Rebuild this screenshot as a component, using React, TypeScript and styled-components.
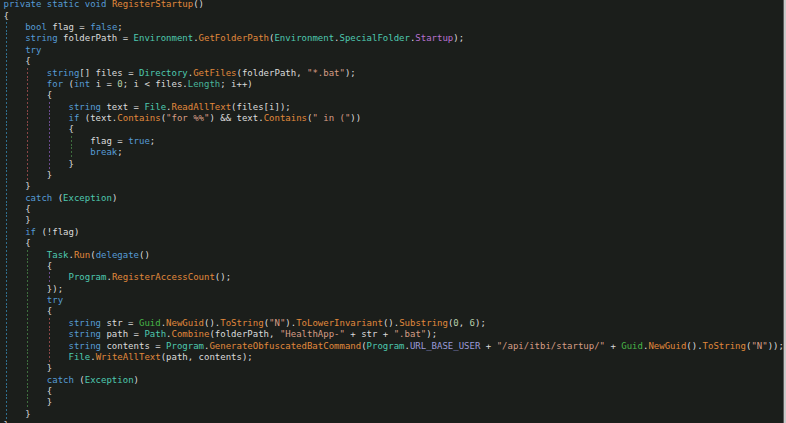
import styled, { createGlobalStyle } from 'styled-components';

type TokenKind = 't' | 'k' | 'm' | 'c' | 's' | 'n' | 'e' | 'p' | 'g' | 'f';
type Token = [TokenKind, string];

interface ICodeLine {
  guides: string[];
  tokens: Token[];
}

// 토큰 종류별 색상
const tokenColors: Record<TokenKind, string> = {
  t: '#dcdcdc',
  k: '#569cd6',
  m: '#e0893b',
  c: '#4ec9b0',
  s: '#d69d85',
  n: '#b5cea8',
  e: '#b872d0',
  p: '#48b59a',
  g: '#48b548',
  f: '#9a9ad8',
};

// 인덴트 가이드 색상
const BLUE = '#2f6f8f';
const RED = '#8a4646';
const PURPLE = '#6a4a8e';
const GREEN = '#3e6e3e';

const m0 = [BLUE];
const tryBlock = [BLUE, RED];
const forBlock = [BLUE, RED, PURPLE];
const ifBlock = [BLUE, RED, PURPLE, GREEN];
const flagBlock = [BLUE, GREEN];
const taskBlock = [BLUE, GREEN, PURPLE];
const innerTry = [BLUE, GREEN, RED];

const lines: ICodeLine[] = [
  { guides: [], tokens: [['k', 'private static void'], ['t', ' '], ['m', 'RegisterStartup'], ['t', '()']] },
  { guides: [], tokens: [['t', '{']] },
  { guides: m0, tokens: [['k', 'bool'], ['t', ' flag = '], ['k', 'false'], ['t', ';']] },
  {
    guides: m0,
    tokens: [
      ['k', 'string'], ['t', ' folderPath = '], ['c', 'Environment'], ['t', '.'], ['m', 'GetFolderPath'],
      ['t', '('], ['c', 'Environment'], ['t', '.'], ['c', 'SpecialFolder'], ['t', '.'], ['e', 'Startup'], ['t', ');'],
    ],
  },
  { guides: m0, tokens: [['k', 'try']] },
  { guides: m0, tokens: [['t', '{']] },
  {
    guides: tryBlock,
    tokens: [
      ['k', 'string'], ['t', '[] files = '], ['c', 'Directory'], ['t', '.'], ['m', 'GetFiles'],
      ['t', '(folderPath, '], ['s', '"*.bat"'], ['t', ');'],
    ],
  },
  {
    guides: tryBlock,
    tokens: [
      ['k', 'for'], ['t', ' ('], ['k', 'int'], ['t', ' i = '], ['n', '0'], ['t', '; i < files.'],
      ['p', 'Length'], ['t', '; i++)'],
    ],
  },
  { guides: tryBlock, tokens: [['t', '{']] },
  {
    guides: forBlock,
    tokens: [
      ['k', 'string'], ['t', ' text = '], ['c', 'File'], ['t', '.'], ['m', 'ReadAllText'], ['t', '(files[i]);'],
    ],
  },
  {
    guides: forBlock,
    tokens: [
      ['k', 'if'], ['t', ' (text.'], ['m', 'Contains'], ['t', '('], ['s', '"for %%"'], ['t', ') && text.'],
      ['m', 'Contains'], ['t', '('], ['s', '" in ("'], ['t', '))'],
    ],
  },
  { guides: forBlock, tokens: [['t', '{']] },
  { guides: ifBlock, tokens: [['t', 'flag = '], ['k', 'true'], ['t', ';']] },
  { guides: ifBlock, tokens: [['k', 'break'], ['t', ';']] },
  { guides: forBlock, tokens: [['t', '}']] },
  { guides: tryBlock, tokens: [['t', '}']] },
  { guides: m0, tokens: [['t', '}']] },
  { guides: m0, tokens: [['k', 'catch'], ['t', ' ('], ['c', 'Exception'], ['t', ')']] },
  { guides: m0, tokens: [['t', '{']] },
  { guides: m0, tokens: [['t', '}']] },
  { guides: m0, tokens: [['k', 'if'], ['t', ' (!flag)']] },
  { guides: m0, tokens: [['t', '{']] },
  {
    guides: flagBlock,
    tokens: [['c', 'Task'], ['t', '.'], ['m', 'Run'], ['t', '('], ['k', 'delegate'], ['t', '()']],
  },
  { guides: flagBlock, tokens: [['t', '{']] },
  {
    guides: taskBlock,
    tokens: [['c', 'Program'], ['t', '.'], ['m', 'RegisterAccessCount'], ['t', '();']],
  },
  { guides: flagBlock, tokens: [['t', '});']] },
  { guides: flagBlock, tokens: [['k', 'try']] },
  { guides: flagBlock, tokens: [['t', '{']] },
  {
    guides: innerTry,
    tokens: [
      ['k', 'string'], ['t', ' str = '], ['g', 'Guid'], ['t', '.'], ['m', 'NewGuid'], ['t', '().'],
      ['m', 'ToString'], ['t', '('], ['s', '"N"'], ['t', ').'], ['m', 'ToLowerInvariant'], ['t', '().'],
      ['m', 'Substring'], ['t', '('], ['n', '0'], ['t', ', '], ['n', '6'], ['t', ');'],
    ],
  },
  {
    guides: innerTry,
    tokens: [
      ['k', 'string'], ['t', ' path = '], ['c', 'Path'], ['t', '.'], ['m', 'Combine'], ['t', '(folderPath, '],
      ['s', '"HealthApp-"'], ['t', ' + str + '], ['s', '".bat"'], ['t', ');'],
    ],
  },
  {
    guides: innerTry,
    tokens: [
      ['k', 'string'], ['t', ' contents = '], ['c', 'Program'], ['t', '.'], ['m', 'GenerateObfuscatedBatCommand'],
      ['t', '('], ['c', 'Program'], ['t', '.'], ['f', 'URL_BASE_USER'], ['t', ' + '], ['s', '"/api/itbi/startup/"'],
      ['t', ' + '], ['g', 'Guid'], ['t', '.'], ['m', 'NewGuid'], ['t', '().'], ['m', 'ToString'], ['t', '('],
      ['s', '"N"'], ['t', '));'],
    ],
  },
  {
    guides: innerTry,
    tokens: [['c', 'File'], ['t', '.'], ['m', 'WriteAllText'], ['t', '(path, contents);']],
  },
  { guides: flagBlock, tokens: [['t', '}']] },
  { guides: flagBlock, tokens: [['k', 'catch'], ['t', ' ('], ['c', 'Exception'], ['t', ')']] },
  { guides: flagBlock, tokens: [['t', '{']] },
  { guides: flagBlock, tokens: [['t', '}']] },
  { guides: m0, tokens: [['t', '}']] },
  { guides: [], tokens: [['t', '}']] },
];

const App = () => {
  return (
    <>
      <GlobalStyle />
      <Editor>
        <Code>
          {lines.map((line, i) => (
            <Line key={i}>
              {line.guides.map((color, g) => (
                <Indent key={g} $color={color} />
              ))}
              {line.tokens.map(([kind, text], j) => (
                <Token key={j} $kind={kind}>
                  {text}
                </Token>
              ))}
            </Line>
          ))}
        </Code>
      </Editor>
    </>
  );
};

const GlobalStyle = createGlobalStyle`
  html, body {
    margin: 0;
    padding: 0;
    background: #c9c9c9;
    overflow: hidden;
  }
`;

const Editor = styled.div`
  width: 783px;
  height: 423px;
  background-color: #1b1e1b;
  border-right: 1px solid #5c5c5c;
  overflow: hidden;
`;

const Code = styled.div`
  display: flex;
  flex-direction: column;
  margin-top: -0.7px;
  padding-left: 3.5px;
  font-family: 'DejaVu Sans Mono', 'Liberation Mono', monospace;
  font-size: 9px;
`;

const Line = styled.div`
  display: flex;
  flex-direction: row;
  flex-shrink: 0;
  height: 11.38px;
  line-height: 11.38px;
  white-space: pre;
`;

const Indent = styled.span<{ $color: string }>`
  flex-shrink: 0;
  width: 4ch;
  height: 100%;
  // 점선 인덴트 가이드
  background-image: repeating-linear-gradient(
    to bottom,
    ${({ $color }) => $color} 0 2px,
    transparent 2px 4px
  );
  background-repeat: no-repeat;
  background-size: 1px 100%;
  background-position: 2px 0;
`;

const Token = styled.span<{ $kind: TokenKind }>`
  color: ${({ $kind }) => tokenColors[$kind]};
`;

export default App;
